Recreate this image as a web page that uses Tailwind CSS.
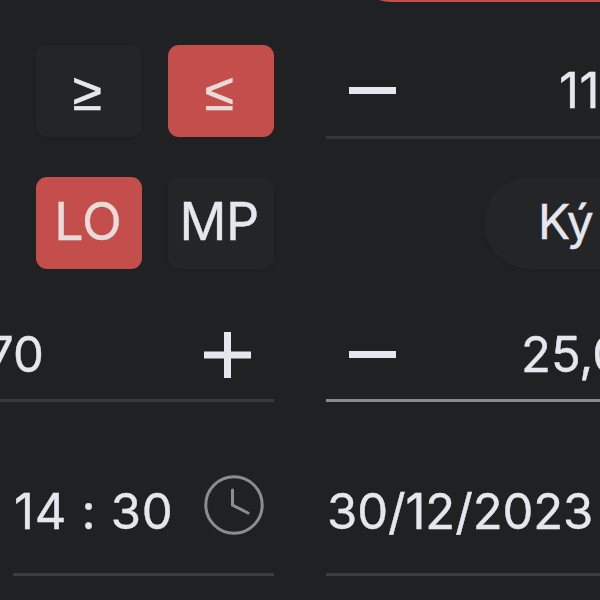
<!DOCTYPE html>
<html lang="vi">
<head>
    <meta charset="UTF-8">
    <title>Form</title>
    <script src="https://cdn.jsdelivr.net/npm/@tailwindcss/browser@4"></script>
</head>
<body class="bg-[#202123] overflow-hidden">

<div class="flex w-[600px] h-[600px] overflow-hidden font-['Inter','Liberation_Sans',sans-serif] [-webkit-text-stroke:0.4px] text-[49px] leading-none text-[#e6e6ee] whitespace-nowrap">

    <!-- left column -->
    <div class="w-[274px] shrink-0 flex flex-col pt-[45px]">
        <div class="flex justify-end gap-[26px] text-[53px] font-['Liberation_Sans',sans-serif] [-webkit-text-stroke:0.7px]">
            <button class="w-[106px] h-[92px] rounded-[11px] bg-[#242527] shadow-sm flex items-center justify-center pr-1">≥</button>
            <button class="w-[106px] h-[92px] rounded-[11px] bg-[#c34e4b] text-[#e8dcd8] flex items-center justify-center pr-1">≤</button>
        </div>
        <div class="flex justify-end gap-[26px] mt-10 text-[52px]">
            <button class="w-[106px] h-[92px] rounded-[11px] bg-[#c34e4b] text-[#e8dcd8] flex items-center justify-center pb-0.5 pr-0.5">LO</button>
            <button class="w-[106px] h-[92px] rounded-[11px] bg-[#242527] shadow-sm flex items-center justify-center pb-0.5 pr-1 tracking-[-0.5px]">MP</button>
        </div>
        <div class="flex items-center justify-between h-[94px] mt-[39px] pt-0.5 pr-[23px] border-b-3 border-[#38393b]">
            <span class="-ml-3.5">70</span>
            <svg class="w-[48px] h-[48px]" viewBox="0 0 48 48" fill="none" stroke="currentColor" stroke-width="7">
                <path d="M1 24H48M24.5 1V47"/>
            </svg>
        </div>
        <div class="flex items-center justify-between h-[134px] mt-10 ml-[13px] pr-[10px] border-b-3 border-[#3d3d3f]">
            <span class="pt-2 pl-px tracking-[0.7px]">14 : 30</span>
            <svg class="w-[60px] h-[60px] mb-[5px]" viewBox="0 0 60 60" fill="none" stroke="#8d8d8e" stroke-width="3" stroke-linecap="round">
                <circle cx="30" cy="30" r="28.2"/>
                <path d="M28.5 15V30L44 38"/>
            </svg>
        </div>
    </div>

    <!-- right column -->
    <div class="w-[274px] shrink-0 ml-[52px] flex flex-col">
        <div class="h-[45px] pl-[20px]">
            <div class="h-[2px] w-[300px] overflow-hidden flex items-end">
                <div class="w-full h-[92px] shrink-0 rounded-[46px] bg-[#c34e4b]"></div>
            </div>
        </div>
        <div class="flex items-center h-[94px] pl-[23px] border-b-3 border-[#343537]">
            <div class="w-[47px] h-[7px] bg-current shrink-0"></div>
            <span class="ml-[163px] tracking-[0.5px]">11</span>
        </div>
        <div class="h-[92px] mt-[38px] ml-[158px] w-[200px] rounded-full bg-[#242527] shadow-sm flex items-center pl-[54px] pb-0.5 text-[48px] tracking-[-1.5px]">Ký</div>
        <div class="flex items-center h-[94px] mt-[39px] pt-0.5 pl-[23px] border-b-3 border-[#8a8a8b]">
            <div class="w-[47px] h-[7px] bg-current shrink-0"></div>
            <span class="ml-[125px]">25,0</span>
        </div>
        <div class="flex items-center h-[134px] mt-10 border-b-3 border-[#3d3d3f]">
            <span class="pt-2 pl-px tracking-[-0.1px]">30/12/2023</span>
        </div>
    </div>
</div>

</body>
</html>
